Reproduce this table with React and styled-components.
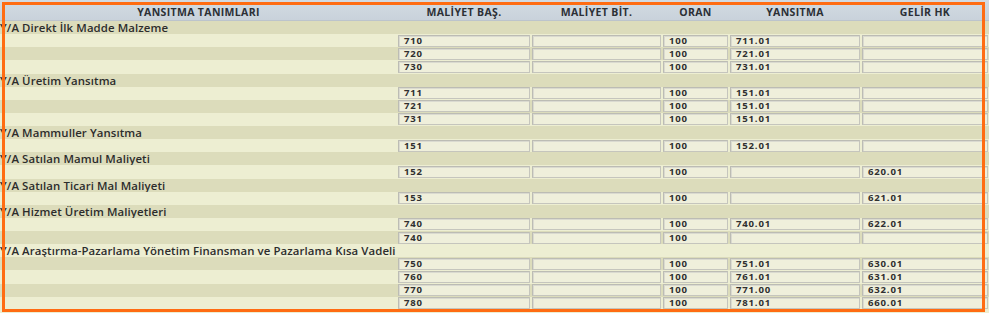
import React from "react";
import styled, { createGlobalStyle } from "styled-components";

const GlobalStyle = createGlobalStyle`
  html, body { margin: 0; padding: 0; background: #ffffff; }
  body { font-family: "Open Sans", "DejaVu Sans", sans-serif; }
`;

const COLS = "397px 134px 131px 67px 132px 1fr";
const ROW_H = "13.14px";

const Page = styled.div`
  position: relative;
  width: 989px;
  height: 313px;
  overflow: hidden;
  background: #edeed2;
`;

const Table = styled.div`
  display: flex;
  flex-direction: column;
  width: 989px;
`;

const HeaderRow = styled.div`
  display: grid;
  grid-template-columns: ${COLS};
  height: 21px;
  background: linear-gradient(#d3dbe2, #c9d2db);
  border-bottom: 1px solid #bcc4cc;
  box-sizing: border-box;
`;

const HeaderCell = styled.div`
  display: flex;
  align-items: center;
  justify-content: center;
  padding-top: 3px;
  font-size: 10.5px;
  font-weight: 700;
  color: #2c3036;
  letter-spacing: 0.35px;
  white-space: nowrap;
`;

const Row = styled.div`
  display: grid;
  grid-template-columns: ${COLS};
  height: ${ROW_H};
  background: ${(p) => (p.$dark ? "#dcdcbb" : "#edeed2")};
  align-items: center;
`;

const GroupLabel = styled.div`
  grid-column: 1 / -1;
  padding-left: 0;
  font-size: 11.4px;
  font-weight: 600;
  letter-spacing: 0.1px;
  color: #2c2c2c;
  white-space: nowrap;
  line-height: ${ROW_H};
`;

const Field = styled.div`
  box-sizing: border-box;
  height: 12px;
  margin: 0 1px;
  border: 1px solid #c5c5bd;
  border-top-color: #bcbcb4;
  border-left-color: #bcbcb4;
  box-shadow: inset 1px 1px 0 #dadad0;
  background: #efefdb;
  padding-left: 5px;
  font-size: 9.6px;
  font-weight: 700;
  letter-spacing: 0.8px;
  line-height: 10px;
  color: #303030;
  white-space: nowrap;
  overflow: hidden;
`;

const Frame = styled.div`
  position: absolute;
  left: 2px;
  top: 2px;
  width: 983px;
  height: 310px;
  box-sizing: border-box;
  border: 3px solid #ff6c12;
  pointer-events: none;
`;

const headers = [
  "YANSITMA TANIMLARI",
  "MALİYET BAŞ.",
  "MALİYET BİT.",
  "ORAN",
  "YANSITMA",
  "GELİR HK",
];

const groups = [
  {
    title: "Y/A Direkt İlk Madde Malzeme",
    rows: [
      ["710", "", "100", "711.01", ""],
      ["720", "", "100", "721.01", ""],
      ["730", "", "100", "731.01", ""],
    ],
  },
  {
    title: "Y/A Üretim Yansıtma",
    rows: [
      ["711", "", "100", "151.01", ""],
      ["721", "", "100", "151.01", ""],
      ["731", "", "100", "151.01", ""],
    ],
  },
  { title: "Y/A Mammuller Yansıtma", rows: [["151", "", "100", "152.01", ""]] },
  { title: "Y/A Satılan Mamul Maliyeti", rows: [["152", "", "100", "", "620.01"]] },
  { title: "Y/A Satılan Ticari Mal Maliyeti", rows: [["153", "", "100", "", "621.01"]] },
  {
    title: "Y/A Hizmet Üretim Maliyetleri",
    rows: [
      ["740", "", "100", "740.01", "622.01"],
      ["740", "", "100", "", ""],
    ],
  },
  {
    title: "Y/A Araştırma-Pazarlama Yönetim Finansman ve Pazarlama Kısa Vadeli",
    rows: [
      ["750", "", "100", "751.01", "630.01"],
      ["760", "", "100", "761.01", "631.01"],
      ["770", "", "100", "771.00", "632.01"],
      ["780", "", "100", "781.01", "660.01"],
    ],
  },
];

export default function App() {
  let idx = 0;
  const rows = [];
  groups.forEach((g, gi) => {
    rows.push(
      <Row key={`g${gi}`} $dark={idx % 2 === 0}>
        <GroupLabel>{g.title}</GroupLabel>
      </Row>
    );
    idx++;
    g.rows.forEach((r, ri) => {
      rows.push(
        <Row key={`r${gi}-${ri}`} $dark={idx % 2 === 0}>
          <div />
          {r.map((v, vi) => (
            <Field key={vi}>{v}</Field>
          ))}
        </Row>
      );
      idx++;
    });
  });

  return (
    <>
      <GlobalStyle />
      <Page>
        <Table>
          <HeaderRow>
            {headers.map((h) => (
              <HeaderCell key={h}>{h}</HeaderCell>
            ))}
          </HeaderRow>
          {rows}
        </Table>
        <Frame />
      </Page>
    </>
  );
}
